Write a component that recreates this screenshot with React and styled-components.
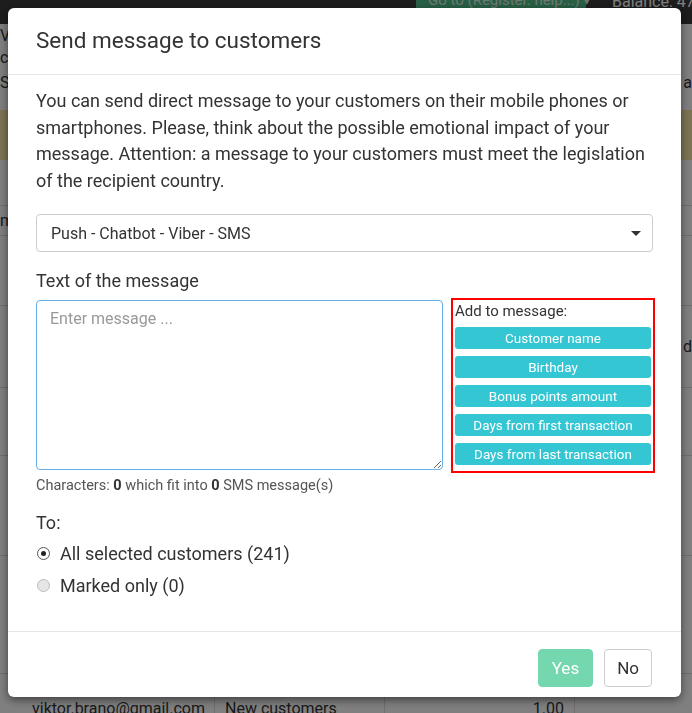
import React from "react";
import styled, { createGlobalStyle } from "styled-components";

const font = `Roboto, "Liberation Sans", Arial, sans-serif`;

const GlobalStyle = createGlobalStyle`
  html, body {
    margin: 0;
    padding: 0;
    background: #fff;
    font-family: ${font};
    color: #333;
  }
  * { box-sizing: border-box; }
`;

/* ---- background page (dimmed by the overlay) ---- */

const Page = styled.div`
  width: 692px;
  height: 713px;
  overflow: hidden;
  background: #fff;
`;

const Navbar = styled.div`
  height: 24px;
  background: #3a3a3a;
  display: flex;
  justify-content: flex-end;
  align-items: flex-start;
  gap: 26px;
`;

const NavButton = styled.div`
  width: 170px;
  height: 8px;
  background: #4fbf8a;
  color: #d8f0e4;
  font-size: 15px;
  line-height: 0;
  padding-left: 12px;
  white-space: nowrap;
`;

const Balance = styled.div`
  color: #fff;
  font-size: 16px;
  line-height: 4px;
  width: 80px;
  white-space: nowrap;
`;

const PageBody = styled.div`
  font-size: 16px;
`;

const PageLine = styled.div`
  height: ${({ h }) => h || 24}px;
  display: flex;
  align-items: center;
  justify-content: space-between;
  border-bottom: ${({ line }) => (line ? "1px solid #ddd" : "none")};
  background: ${({ bg }) => bg || "transparent"};
`;

const TableRow = styled.div`
  display: grid;
  grid-template-columns: 214px 170px 190px 1fr;
  height: 42px;
  align-items: end;
  font-size: 16px;
`;

const Cell = styled.div`
  padding: 0 10px 0 ${({ pad }) => pad || 10}px;
  border-left: ${({ edge }) => (edge ? "1px solid #ddd" : "none")};
  height: 100%;
  display: flex;
  align-items: flex-end;
  justify-content: ${({ right }) => (right ? "flex-end" : "flex-start")};
  line-height: 14px;
`;

const Overlay = styled.div`
  position: fixed;
  inset: 0;
  background: rgba(0, 0, 0, 0.5);
`;

/* ---- modal ---- */

const Modal = styled.div`
  position: fixed;
  top: 8px;
  left: 8px;
  width: 673px;
  background: #fff;
  border-radius: 6px;
  box-shadow: 0 3px 9px rgba(0, 0, 0, 0.5);
`;

const Header = styled.div`
  height: 67px;
  display: flex;
  align-items: center;
  padding: 0 28px 2px;
  border-bottom: 1px solid #e5e5e5;
`;

const Title = styled.h4`
  margin: 0;
  font-size: 22.5px;
  font-weight: 400;
  color: #333;
`;

const Body = styled.div`
  padding: 13px 28px 30px;
`;

const Intro = styled.p`
  margin: 0;
  font-size: 18px;
  line-height: 26.5px;
  color: #333;
`;

const Select = styled.div`
  margin-top: 20px;
  height: 38px;
  border: 1px solid #ccc;
  border-radius: 4px;
  display: flex;
  align-items: center;
  justify-content: space-between;
  padding: 0 11px 0 14px;
  font-size: 16px;
  color: #333;
`;

const Caret = styled.span`
  width: 0;
  height: 0;
  border-left: 5px solid transparent;
  border-right: 5px solid transparent;
  border-top: 5px solid #333;
`;

const Label = styled.div`
  margin-top: 16px;
  font-size: 18px;
  line-height: 26px;
`;

const Editor = styled.div`
  margin-top: 4px;
  display: grid;
  grid-template-columns: 407px 204px;
  column-gap: 8px;
  align-items: start;
`;

const TextArea = styled.textarea`
  margin-top: 2px;
  height: 170px;
  width: 100%;
  border: 1px solid #66afe9;
  border-radius: 4px;
  padding: 8px 13px;
  font-family: ${font};
  font-size: 16px;
  color: #333;
  resize: vertical;
  outline: none;
  &::placeholder {
    color: #999;
  }
`;

const Inserts = styled.div`
  border: 2px solid #f00;
  padding: 2px 2px 6px;
  display: flex;
  flex-direction: column;
  gap: 7px;
`;

const InsertsTitle = styled.div`
  font-size: 15px;
  line-height: 18px;
  color: #333;
`;

const InsertButton = styled.button`
  height: 22px;
  border: none;
  border-radius: 3px;
  background: #34c6d3;
  color: #fff;
  font-family: ${font};
  font-size: 13.5px;
  padding: 0;
  cursor: pointer;
`;

const Counter = styled.div`
  margin-top: 3px;
  font-size: 14.5px;
  line-height: 20px;
  color: #555;
  b {
    color: #333;
  }
`;

const ToLabel = styled.div`
  margin-top: 14px;
  font-size: 18px;
  line-height: 26px;
`;

const RadioRow = styled.label`
  display: flex;
  align-items: center;
  gap: 10px;
  height: 32px;
  font-size: 18px;
  color: #333;
  &:first-of-type {
    margin-top: 1px;
  }
`;

const RadioMark = styled.span`
  width: 13px;
  height: 13px;
  margin-left: 1px;
  border-radius: 50%;
  border: 1px solid ${({ checked }) => (checked ? "#555" : "#bbb")};
  background: ${({ checked }) => (checked ? "#fff" : "#e6e6e6")};
  display: flex;
  align-items: center;
  justify-content: center;
  &::after {
    content: "";
    width: 5px;
    height: 5px;
    border-radius: 50%;
    background: ${({ checked }) => (checked ? "#222" : "transparent")};
  }
`;

const Footer = styled.div`
  border-top: 1px solid #e5e5e5;
  padding: 17px 29px 11px;
  display: flex;
  justify-content: flex-end;
  gap: 11px;
  height: 66px;
`;

const Button = styled.button`
  height: 38px;
  padding: 0 ${({ primary }) => (primary ? 13 : 12)}px;
  border-radius: 4px;
  font-family: ${font};
  font-size: 17px;
  border: 1px solid ${({ primary }) => (primary ? "#74d7ae" : "#ccc")};
  background: ${({ primary }) => (primary ? "#74d7ae" : "#fff")};
  color: ${({ primary }) => (primary ? "#fff" : "#333")};
`;

const inserts = [
  "Customer name",
  "Birthday",
  "Bonus points amount",
  "Days from first transaction",
  "Days from last transaction",
];

export default function App() {
  return (
    <>
      <GlobalStyle />
      <Page>
        <Navbar>
          <NavButton>Go to (Register. help...) ▾</NavButton>
          <Balance>Balance: 47</Balance>
        </Navbar>
        <PageBody>
          <PageLine h={22}>Vi</PageLine>
          <PageLine h={22}>ch</PageLine>
          <PageLine h={28}>
            Se <span>a</span>
          </PageLine>
          <PageLine h={14} />
          <PageLine h={50} bg="#f7e7a6" />
          <PageLine h={46} line />
          <PageLine h={30} line>m</PageLine>
          <PageLine h={70} line />
          <PageLine h={82} line>
            <span />
            <span>d</span>
          </PageLine>
          <PageLine h={68} line />
          <PageLine h={100} line />
          <PageLine h={118} line />
          <TableRow>
            <Cell pad={32}>viktor.brano@gmail.com</Cell>
            <Cell edge>New customers</Cell>
            <Cell edge right>1.00</Cell>
            <Cell edge />
          </TableRow>
        </PageBody>
      </Page>
      <Overlay />
      <Modal>
        <Header>
          <Title>Send message to customers</Title>
        </Header>
        <Body>
          <Intro>
            You can send direct message to your customers on their mobile phones or
            smartphones. Please, think about the possible emotional impact of your
            message. Attention: a message to your customers must meet the legislation
            of the recipient country.
          </Intro>
          <Select>
            <span>Push - Chatbot - Viber - SMS</span>
            <Caret />
          </Select>
          <Label>Text of the message</Label>
          <Editor>
            <TextArea placeholder="Enter message ..." />
            <Inserts>
              <InsertsTitle>Add to message:</InsertsTitle>
              {inserts.map((item) => (
                <InsertButton key={item}>{item}</InsertButton>
              ))}
            </Inserts>
          </Editor>
          <Counter>
            Characters: <b>0</b> which fit into <b>0</b> SMS message(s)
          </Counter>
          <ToLabel>To:</ToLabel>
          <RadioRow>
            <RadioMark checked />
            All selected customers (241)
          </RadioRow>
          <RadioRow>
            <RadioMark />
            Marked only (0)
          </RadioRow>
        </Body>
        <Footer>
          <Button primary>Yes</Button>
          <Button>No</Button>
        </Footer>
      </Modal>
    </>
  );
}
